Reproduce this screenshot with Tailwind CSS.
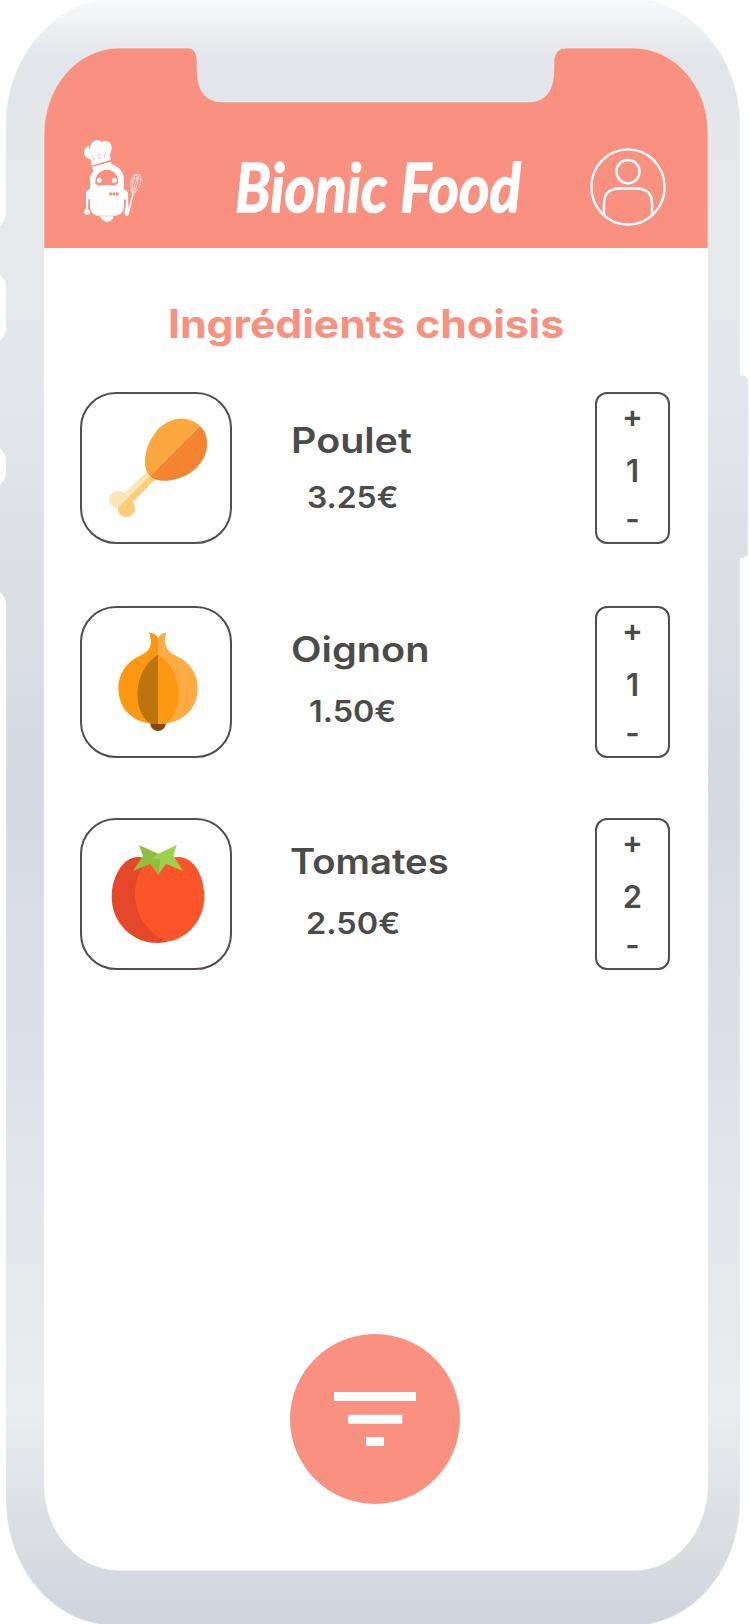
<!DOCTYPE html>
<html lang="fr">
<head>
<meta charset="utf-8">
<title>Bionic Food</title>
<script src="https://cdn.jsdelivr.net/npm/@tailwindcss/browser@4"></script>
</head>
<body class="bg-white">
<div class="relative w-[750px] h-[1624px] overflow-hidden font-['Inter',sans-serif] text-[#4b4b4a]">
  <div class="ml-[44px] w-[664px] pt-[20px]">
    <header class="h-[228px] rounded-t-[90px] bg-[#f99080] flex items-start">
      <svg class="ml-[39px] mt-[119px] w-[60px] h-[84px] shrink-0" viewBox="249 417 180 252" fill="#fff">
        <path d="M275 497L272 478Q251 474 252 456Q254 439 267 437Q267 445 269 450Q271 423 290 420Q300 420 305 425Q323 418 333 432Q338 449 330 462L332 479Z"/>
        <path d="M275 501L333 485L335 493Q371 504 372 542L372 569Q383 570 384 582L385 625L397 582L401 584L388 635Q388 646 380 648Q371 644 374 632Q378 625 378 600Q374 596 372 600V622Q370 642 348 647H291Q271 641 270 620V598H265L264 627Q274 636 267 643Q257 649 252 638Q251 630 258 626V580Q258 571 270 567V539Q271 523 280 514Z"/>
        <path d="M300 649H341Q337 665 320 666Q305 663 300 649Z"/>
        <path d="M321 509C344 509 355 529 355 546C350 562 336 555 321 555C306 555 294 562 286 550C284 529 298 509 321 509Z" fill="#f99080"/>
        <ellipse cx="298" cy="541" rx="7" ry="8"/><ellipse cx="343" cy="541" rx="7" ry="8"/>
        <g fill="#f99080"><circle cx="332" cy="582" r="5"/><circle cx="342" cy="582" r="5"/><circle cx="352" cy="582" r="5"/></g>
        <g stroke="#f99080" stroke-width="2.5" fill="none"><path d="M277 467L285 482M296 463L298 478M316 458L313 475" stroke-dasharray="6 2"/></g>
        <g stroke="#fff" stroke-width="2" fill="none"><path d="M397 583C387 552 394 526 408 523C430 522 430 550 400 583M398 580C394 555 400 532 408 524C420 532 412 560 400 580M400 580C402 550 410 536 418 527M394 550C400 536 412 528 424 540"/></g>
      </svg>
      <svg class="ml-[82px] mt-[126px] w-[320px] h-[90px] shrink-0" viewBox="0 0 320 90">
        <text x="10" y="66" textLength="286" lengthAdjust="spacingAndGlyphs" fill="#fff" stroke="#fff" stroke-width="1.500" stroke-linejoin="round" font-family="Lato, sans-serif" font-style="italic" font-weight="700" font-size="66">Bionic Food</text>
      </svg>
      <svg class="ml-[44px] mt-[127px] w-[78px] h-[80px] shrink-0" viewBox="0 0 78 80" fill="none" stroke="#fff" stroke-width="2.4">
        <ellipse cx="39" cy="40" rx="36.6" ry="37.6"/><circle cx="39" cy="24.6" r="11.6"/>
        <path d="M15 68V57Q15 41.5 30.500 41.500H47.500Q63 41.500 63 57V68"/>
      </svg>
    </header>
    <main class="px-[36px]">
      <h1 class="mt-[46px] pl-[88px] h-[60px] leading-[60px] text-[39px] font-bold text-[#f99080] whitespace-nowrap"><span class="inline-block origin-left scale-x-[1.095]">Ingrédients choisis</span></h1>

      <section class="mt-[38px] flex h-[152px]">
        <div class="w-[152px] shrink-0 rounded-[36px] border-2 border-[#544c4e]">
          <svg class="w-[148px] h-[148px]" viewBox="36 312 444 444">
            <path d="M230 546L163 609C150 598 117 602 117 629C118 650 138 656 146 653L243 558Z" fill="#ffe6b8"/>
            <path d="M254 570L188 635C205 653 191 681 170 681C151 681 143 667 144 653L240 558Z" fill="#ffcd78"/>
            <path d="M240 558C212 530 226 466 256 428C292 380 354 374 390 408Z" fill="#faa83d"/>
            <path d="M240 558C268 586 336 570 372 540C418 502 424 442 390 408Z" fill="#f48430"/>
          </svg>
        </div>
        <div class="ml-[60px] w-[303px]">
          <h2 class="-ml-px mt-[26px] h-[44px] leading-[44px] text-[35px] font-semibold"><span class="inline-block origin-left scale-x-[1.126]">Poulet</span></h2>
          <p class="mt-[17px] pl-[15px] h-[36px] leading-[36px] text-[30.500px] font-semibold"><span class="inline-block origin-left scale-x-[1.045]">3.25€</span></p>
        </div>
        <div class="w-[75px] shrink-0 rounded-[12px] border-2 border-[#544c4e] flex flex-col items-center text-[31px] font-semibold">
          <button class="h-[44px] leading-[44px]">+</button><span class="mt-[7px] h-[52px] leading-[52px]">1</span><button class="h-[44px] leading-[44px]">-</button>
        </div>
      </section>

      <section class="mt-[62px] flex h-[152px]">
        <div class="w-[152px] shrink-0 rounded-[36px] border-2 border-[#544c4e]">
          <svg class="w-[148px] h-[148px]" viewBox="36 54 444 444">
            <path d="M240 400H288C286 415 276 423 264 423S242 415 240 400Z" fill="#824b09"/>
            <path d="M264 143Q256 128 238 129C242 143 243 150 243 160C239 184 223 191 207 199C168 216 145 254 145 293C145 358 190 402 264 402Z" fill="#ff9811"/>
            <path d="M264 143Q272 128 289 129C285 143 285 150 286 160C290 184 306 191 321 199C360 216 383 254 383 293C383 358 338 402 264 402Z" fill="#ffac44"/>
            <path d="M264 194C185 240 185 375 246 402H264Z" fill="#be740d"/>
            <path d="M264 194C343 240 343 375 282 402H264Z" fill="#ff9811"/>
          </svg>
        </div>
        <div class="ml-[60px] w-[303px]">
          <h2 class="-ml-px mt-[21px] h-[44px] leading-[44px] text-[35px] font-semibold"><span class="inline-block origin-left scale-x-[1.135]">Oignon</span></h2>
          <p class="mt-[22px] pl-[17px] h-[36px] leading-[36px] text-[30.500px] font-semibold"><span class="inline-block origin-left scale-x-[1.06]">1.50€</span></p>
        </div>
        <div class="w-[75px] shrink-0 rounded-[12px] border-2 border-[#544c4e] flex flex-col items-center text-[31px] font-semibold">
          <button class="h-[44px] leading-[44px]">+</button><span class="mt-[7px] h-[52px] leading-[52px]">1</span><button class="h-[44px] leading-[44px]">-</button>
        </div>
      </section>

      <section class="mt-[60px] flex h-[152px]">
        <div class="w-[152px] shrink-0 rounded-[36px] border-2 border-[#544c4e]">
          <svg class="w-[148px] h-[148px]" viewBox="36 60 444 444">
            <path d="M207 171C160 168 125 230 125 290C125 366 184 429 264 429Q286 428 301 422L280 180Z" fill="#e64728"/>
            <path d="M240 176C184 224 184 314 222 368C250 408 275 420 298 424C361 410 403 354 403 290C403 230 373 171 325 171Z" fill="#fc5529"/>
            <path d="M207 135L265 161L270 178L264 225L241 192L189 213L219 167Z" fill="#91bd43"/>
            <path d="M320 135L310 167L339 213L288 191L264 225L270 178L249 174L265 161Z" fill="#9cd34a"/>
            <path d="M249 174L270 178L265 161Z" fill="#9cd34a"/>
          </svg>
        </div>
        <div class="ml-[60px] w-[303px]">
          <h2 class="-ml-[2px] mt-[21px] h-[44px] leading-[44px] text-[35px] font-semibold"><span class="inline-block origin-left scale-x-[1.093]">Tomates</span></h2>
          <p class="mt-[22px] pl-[14px] h-[36px] leading-[36px] text-[30.500px] font-semibold"><span class="inline-block origin-left scale-x-[1.065]">2.50€</span></p>
        </div>
        <div class="w-[75px] shrink-0 rounded-[12px] border-2 border-[#544c4e] flex flex-col items-center text-[31px] font-semibold">
          <button class="h-[44px] leading-[44px]">+</button><span class="mt-[7px] h-[52px] leading-[52px]">2</span><button class="h-[44px] leading-[44px]">-</button>
        </div>
      </section>

      <button class="mt-[364px] ml-[210px] block w-[170px] h-[170px] rounded-full bg-[#f99080]" aria-label="Filtrer">
        <svg class="w-[170px] h-[170px]" viewBox="60 72 510 510" fill="#fff"><path d="M192 246H438V273H192ZM234 314H397V341H234ZM288 381H342V408H288Z"/></svg>
      </button>
    </main>
  </div>
  <!-- Phone shell with the screen cut out -->
  <svg class="absolute inset-0 w-[750px] h-[1624px] pointer-events-none" viewBox="0 0 750 1624">
    <defs>
      <linearGradient id="metal" gradientUnits="userSpaceOnUse" x1="0" y1="0" x2="0" y2="1624">
        <stop offset="0" stop-color="#f8f9fa"/><stop offset=".025" stop-color="#e9ecee"/><stop offset=".038" stop-color="#e2e5ea"/>
        <stop offset=".065" stop-color="#e3e6eb"/><stop offset=".068" stop-color="#e4e8ea"/><stop offset=".16" stop-color="#e6eaed"/>
        <stop offset=".24" stop-color="#e3e7eb"/><stop offset=".34" stop-color="#dde1e6"/><stop offset=".48" stop-color="#d5dae0"/>
        <stop offset=".62" stop-color="#dcdfe6"/><stop offset=".8" stop-color="#e6eaed"/><stop offset=".87" stop-color="#eaeef0"/>
        <stop offset=".92" stop-color="#dfe2e7"/><stop offset=".966" stop-color="#d7dbe0"/><stop offset=".968" stop-color="#d6dae2"/><stop offset="1" stop-color="#cfd4dd"/>
      </linearGradient>
    </defs>
    <path fill="url(#metal)" stroke="#f0f3f5" stroke-opacity=".6" stroke-width="1" fill-rule="evenodd" d="M120 -2C50 0 6 60 6 125V215Q5 220 0 226H-2V275H0Q6 281 6 285V330Q6 334 0 341H-2V448H0Q6 454 6 458V474Q6 478 0 485H-2V592H0Q6 598 6 604V1500C6 1565 50 1624 115 1626H632C697 1624 740 1565 740 1500V558Q748 558 748 552V381Q748 375 740 375V125C740 60 696 0 626 -2ZM120 48H188Q196 48 197 59C197 80 197 102 224 102H527C554 102 554 80 554 59Q556 48 566 48H632C676 48 708 87 708 132V1484C708 1529 678 1570.5 634 1570.500H120C76 1570.5 44 1530 44 1484V135C44 88 76 48 120 48Z"/>
  </svg>
</div>
</body>
</html>
